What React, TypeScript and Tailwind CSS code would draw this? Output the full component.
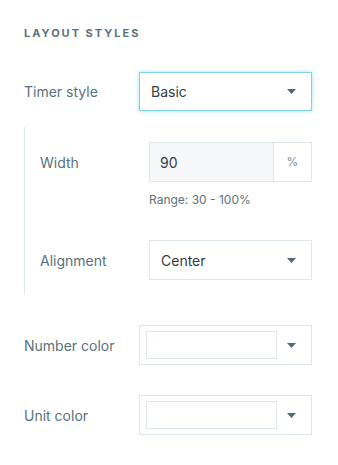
import React from "react";

const Caret = () => (
  <svg width="9" height="5" viewBox="0 0 9 5" className="shrink-0">
    <path d="M0 0h9L4.5 5z" fill="#4f6a73" />
  </svg>
);

const Label: React.FC<{ children: React.ReactNode; className?: string }> = ({ children, className }) => (
  <div className={`text-[14px] text-[#5b727a] ${className ?? ""}`}>{children}</div>
);

const ColorPicker: React.FC = () => (
  <div className="flex h-[40px] w-[173px] items-center border border-[#dfe7ec] bg-white pl-[6px] pr-[15px]">
    <div className="h-[28px] w-[131px] border border-[#dfe7ec] bg-white" />
    <div className="flex flex-1 justify-end">
      <Caret />
    </div>
  </div>
);

export default function App() {
  return (
    <div
      className="h-[465px] w-[338px] bg-white pl-[24px] pt-[26px]"
      style={{ fontFamily: "Inter, 'Noto Sans', sans-serif" }}
    >
      <div className="text-[11px] font-bold leading-[14px] tracking-[2px] text-[#5a737b]">LAYOUT STYLES</div>

      {/* Timer style */}
      <div className="mt-[32px] flex items-center">
        <Label className="w-[115px]">Timer style</Label>
        <div className="flex h-[39px] w-[173px] items-center justify-between border border-[#7fd3e3] bg-white pl-[11px] pr-[15px] shadow-[0_0_4px_rgba(90,200,225,0.55)]">
          <span className="text-[14px] text-[#333d42]">Basic</span>
          <Caret />
        </div>
      </div>

      {/* Indented section */}
      <div className="mt-[16px] w-[288px] border-l border-[#dde6eb] pb-[15px] pl-[15px] pt-[15px]">
        <div className="flex items-center">
          <Label className="w-[109px]">Width</Label>
          <div className="flex h-[40px] w-[163px] border border-[#dfe7ec]">
            <div className="flex flex-1 items-center bg-[#f5f7f9] pl-[10px] text-[14px] text-[#333d42]">90</div>
            <div className="flex w-[38px] items-center justify-center border-l border-[#dfe7ec] bg-white text-[12px] text-[#7b9199]">
              %
            </div>
          </div>
        </div>
        <div className="ml-[109px] mt-[11px] text-[12px] leading-[14px] text-[#5b727a]">Range: 30 - 100%</div>

        <div className="mt-[33px] flex items-center">
          <Label className="w-[109px]">Alignment</Label>
          <div className="flex h-[40px] w-[163px] items-center justify-between border border-[#dfe7ec] bg-white pl-[11px] pr-[15px]">
            <span className="text-[14px] text-[#333d42]">Center</span>
            <Caret />
          </div>
        </div>
      </div>

      <div className="mt-[30px] flex items-center">
        <Label className="w-[115px]">Number color</Label>
        <ColorPicker />
      </div>

      <div className="mt-[30px] flex items-center">
        <Label className="w-[115px]">Unit color</Label>
        <ColorPicker />
      </div>
    </div>
  );
}
